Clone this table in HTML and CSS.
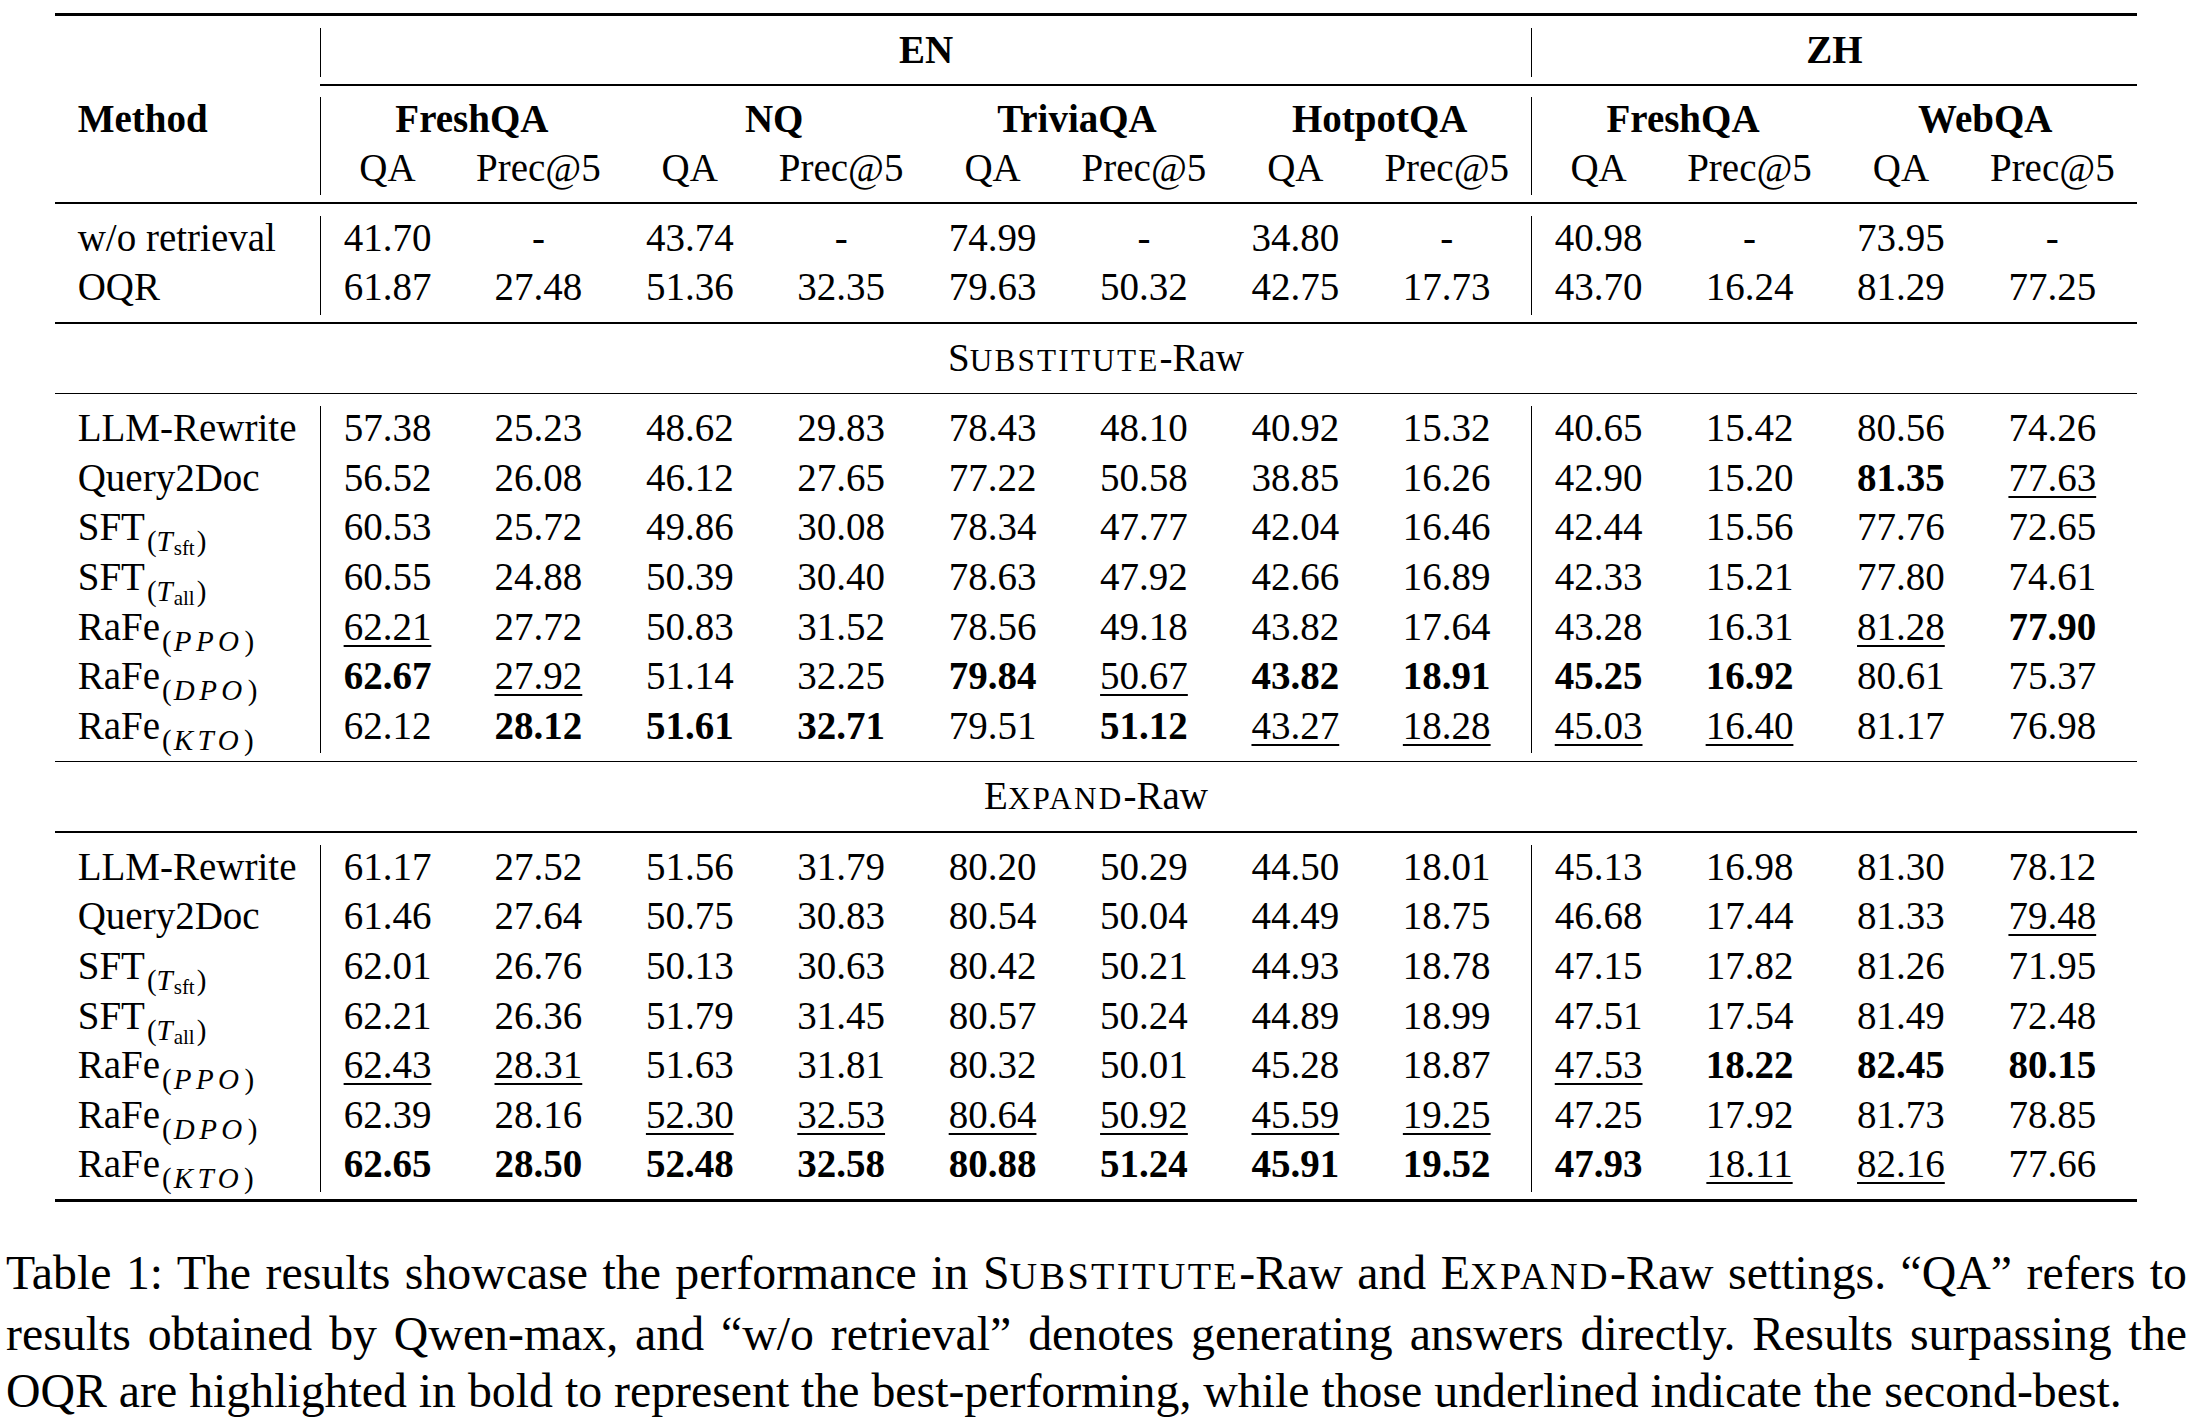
FILE: index.html
```html
<!DOCTYPE html>
<html lang="en">
<head>
<meta charset="utf-8">
<title>Table 1</title>
<link rel="stylesheet" href="styles.css">
</head>
<body>
<div class="page">
  <div class="table">
    <div class="rule thick top"></div>

    <div class="grid head1">
      <div class="cell"></div>
      <div class="grp vr en">EN</div>
      <div class="grp vr zh">ZH</div>
    </div>

    <div class="cmid"></div>

    <div class="grid head2">
      <div class="m b">Method</div>
      <div class="ds vr b">FreshQA</div>
      <div class="ds b">NQ</div>
      <div class="ds b">TriviaQA</div>
      <div class="ds b">HotpotQA</div>
      <div class="ds vr b">FreshQA</div>
      <div class="ds b">WebQA</div>

      <div class="m"></div>
      <div class="c vr">QA</div><div class="c">Prec@5</div>
      <div class="c">QA</div><div class="c">Prec@5</div>
      <div class="c">QA</div><div class="c">Prec@5</div>
      <div class="c">QA</div><div class="c">Prec@5</div>
      <div class="c vr">QA</div><div class="c">Prec@5</div>
      <div class="c">QA</div><div class="c">Prec@5</div>
    </div>

    <div class="rule mid"></div>

    <div class="grid body">
      <div class="m">w/o retrieval</div>
      <div class="c vr">41.70</div><div class="c">-</div><div class="c">43.74</div><div class="c">-</div><div class="c">74.99</div><div class="c">-</div><div class="c">34.80</div><div class="c">-</div><div class="c vr">40.98</div><div class="c">-</div><div class="c">73.95</div><div class="c">-</div>

      <div class="m">OQR</div>
      <div class="c vr">61.87</div><div class="c">27.48</div><div class="c">51.36</div><div class="c">32.35</div><div class="c">79.63</div><div class="c">50.32</div><div class="c">42.75</div><div class="c">17.73</div><div class="c vr">43.70</div><div class="c">16.24</div><div class="c">81.29</div><div class="c">77.25</div>
    </div>

    <div class="rule mid"></div>
    <div class="section">S<span class="sc">UBSTITUTE</span>-Raw</div>
    <div class="rule mid"></div>

    <div class="grid body">
      <div class="m">LLM-Rewrite</div>
      <div class="c vr">57.38</div><div class="c">25.23</div><div class="c">48.62</div><div class="c">29.83</div><div class="c">78.43</div><div class="c">48.10</div><div class="c">40.92</div><div class="c">15.32</div><div class="c vr">40.65</div><div class="c">15.42</div><div class="c">80.56</div><div class="c">74.26</div>

      <div class="m">Query2Doc</div>
      <div class="c vr">56.52</div><div class="c">26.08</div><div class="c">46.12</div><div class="c">27.65</div><div class="c">77.22</div><div class="c">50.58</div><div class="c">38.85</div><div class="c">16.26</div><div class="c vr">42.90</div><div class="c">15.20</div><div class="c"><b>81.35</b></div><div class="c"><u>77.63</u></div>

      <div class="m">SFT<span class="sub">(<i>T</i><span class="ss">sft</span>)</span></div>
      <div class="c vr">60.53</div><div class="c">25.72</div><div class="c">49.86</div><div class="c">30.08</div><div class="c">78.34</div><div class="c">47.77</div><div class="c">42.04</div><div class="c">16.46</div><div class="c vr">42.44</div><div class="c">15.56</div><div class="c">77.76</div><div class="c">72.65</div>

      <div class="m">SFT<span class="sub">(<i>T</i><span class="ss">all</span>)</span></div>
      <div class="c vr">60.55</div><div class="c">24.88</div><div class="c">50.39</div><div class="c">30.40</div><div class="c">78.63</div><div class="c">47.92</div><div class="c">42.66</div><div class="c">16.89</div><div class="c vr">42.33</div><div class="c">15.21</div><div class="c">77.80</div><div class="c">74.61</div>

      <div class="m">RaFe<span class="sub">(<i class="mi">PPO</i>)</span></div>
      <div class="c vr"><u>62.21</u></div><div class="c">27.72</div><div class="c">50.83</div><div class="c">31.52</div><div class="c">78.56</div><div class="c">49.18</div><div class="c">43.82</div><div class="c">17.64</div><div class="c vr">43.28</div><div class="c">16.31</div><div class="c"><u>81.28</u></div><div class="c"><b>77.90</b></div>

      <div class="m">RaFe<span class="sub">(<i class="mi">DPO</i>)</span></div>
      <div class="c vr"><b>62.67</b></div><div class="c"><u>27.92</u></div><div class="c">51.14</div><div class="c">32.25</div><div class="c"><b>79.84</b></div><div class="c"><u>50.67</u></div><div class="c"><b>43.82</b></div><div class="c"><b>18.91</b></div><div class="c vr"><b>45.25</b></div><div class="c"><b>16.92</b></div><div class="c">80.61</div><div class="c">75.37</div>

      <div class="m">RaFe<span class="sub">(<i class="mi">KTO</i>)</span></div>
      <div class="c vr">62.12</div><div class="c"><b>28.12</b></div><div class="c"><b>51.61</b></div><div class="c"><b>32.71</b></div><div class="c">79.51</div><div class="c"><b>51.12</b></div><div class="c"><u>43.27</u></div><div class="c"><u>18.28</u></div><div class="c vr"><u>45.03</u></div><div class="c"><u>16.40</u></div><div class="c">81.17</div><div class="c">76.98</div>
    </div>

    <div class="rule mid"></div>
    <div class="section">E<span class="sc">XPAND</span>-Raw</div>
    <div class="rule mid"></div>

    <div class="grid body">
      <div class="m">LLM-Rewrite</div>
      <div class="c vr">61.17</div><div class="c">27.52</div><div class="c">51.56</div><div class="c">31.79</div><div class="c">80.20</div><div class="c">50.29</div><div class="c">44.50</div><div class="c">18.01</div><div class="c vr">45.13</div><div class="c">16.98</div><div class="c">81.30</div><div class="c">78.12</div>

      <div class="m">Query2Doc</div>
      <div class="c vr">61.46</div><div class="c">27.64</div><div class="c">50.75</div><div class="c">30.83</div><div class="c">80.54</div><div class="c">50.04</div><div class="c">44.49</div><div class="c">18.75</div><div class="c vr">46.68</div><div class="c">17.44</div><div class="c">81.33</div><div class="c"><u>79.48</u></div>

      <div class="m">SFT<span class="sub">(<i>T</i><span class="ss">sft</span>)</span></div>
      <div class="c vr">62.01</div><div class="c">26.76</div><div class="c">50.13</div><div class="c">30.63</div><div class="c">80.42</div><div class="c">50.21</div><div class="c">44.93</div><div class="c">18.78</div><div class="c vr">47.15</div><div class="c">17.82</div><div class="c">81.26</div><div class="c">71.95</div>

      <div class="m">SFT<span class="sub">(<i>T</i><span class="ss">all</span>)</span></div>
      <div class="c vr">62.21</div><div class="c">26.36</div><div class="c">51.79</div><div class="c">31.45</div><div class="c">80.57</div><div class="c">50.24</div><div class="c">44.89</div><div class="c">18.99</div><div class="c vr">47.51</div><div class="c">17.54</div><div class="c">81.49</div><div class="c">72.48</div>

      <div class="m">RaFe<span class="sub">(<i class="mi">PPO</i>)</span></div>
      <div class="c vr"><u>62.43</u></div><div class="c"><u>28.31</u></div><div class="c">51.63</div><div class="c">31.81</div><div class="c">80.32</div><div class="c">50.01</div><div class="c">45.28</div><div class="c">18.87</div><div class="c vr"><u>47.53</u></div><div class="c"><b>18.22</b></div><div class="c"><b>82.45</b></div><div class="c"><b>80.15</b></div>

      <div class="m">RaFe<span class="sub">(<i class="mi">DPO</i>)</span></div>
      <div class="c vr">62.39</div><div class="c">28.16</div><div class="c"><u>52.30</u></div><div class="c"><u>32.53</u></div><div class="c"><u>80.64</u></div><div class="c"><u>50.92</u></div><div class="c"><u>45.59</u></div><div class="c"><u>19.25</u></div><div class="c vr">47.25</div><div class="c">17.92</div><div class="c">81.73</div><div class="c">78.85</div>

      <div class="m">RaFe<span class="sub">(<i class="mi">KTO</i>)</span></div>
      <div class="c vr"><b>62.65</b></div><div class="c"><b>28.50</b></div><div class="c"><b>52.48</b></div><div class="c"><b>32.58</b></div><div class="c"><b>80.88</b></div><div class="c"><b>51.24</b></div><div class="c"><b>45.91</b></div><div class="c"><b>19.52</b></div><div class="c vr"><b>47.93</b></div><div class="c"><u>18.11</u></div><div class="c"><u>82.16</u></div><div class="c">77.66</div>
    </div>

    <div class="rule thick bottom"></div>
  </div>

  <div class="caption">
    <div class="line just">Table 1: The results showcase the performance in S<span class="csc">UBSTITUTE</span>-Raw and E<span class="csc">XPAND</span>-Raw settings. “QA” refers to</div>
    <div class="line just">results obtained by Qwen-max, and “w/o retrieval” denotes generating answers directly. Results surpassing the</div>
    <div class="line">OQR are highlighted in bold to represent the best-performing, while those underlined indicate the second-best.</div>
  </div>
</div>
</body>
</html>
```

FILE: styles.css
```css
html, body {
  margin: 0;
  padding: 0;
  background: #ffffff;
}

body {
  font-family: "Liberation Serif", "Times New Roman", Times, serif;
  color: #000;
}

.page {
  padding-top: 13px;
}

.table {
  margin-left: 55px;
  width: 2082px;
  display: flex;
  flex-direction: column;
  font-size: 39px;
}

.rule {
  background: #000;
  width: 100%;
}

.rule.thick {
  height: 3px;
}

.rule.top {
  margin-bottom: 12px;
}

.rule.bottom {
  margin-top: 7px;
}

.rule.mid {
  height: 1.5px;
  margin-top: 7.5px;
  margin-bottom: 12px;
}

.cmid {
  height: 1.5px;
  background: #000;
  margin: 7px 0 11px 265px;
}

.grid {
  display: grid;
  grid-template-columns: 265px repeat(12, 151.4px);
  line-height: 44px;
}

.head1 {
  grid-template-rows: 49px;
}

.head2 {
  grid-auto-rows: 49px;
}

.body {
  grid-auto-rows: 49.6px;
}

.vr {
  border-left: 1px solid #000;
}

.grp {
  font-weight: bold;
  text-align: center;
}

.en {
  grid-column: 2 / 10;
}

.zh {
  grid-column: 10 / 14;
}

.ds {
  grid-column: span 2;
  text-align: center;
}

.b {
  font-weight: bold;
}

.m {
  padding-left: 22.7px;
  white-space: nowrap;
}

.c {
  padding-right: 17.4px;
  text-align: center;
  white-space: nowrap;
}

.c u {
  text-decoration: underline;
  text-decoration-thickness: 1.5px;
  text-underline-offset: 5px;
}

.sub {
  font-size: 29px;
  line-height: 0;
  vertical-align: -11px;
  padding-left: 2px;
}

.sub i {
  font-style: italic;
  padding-right: 1px;
}

.sub .mi {
  letter-spacing: 4.5px;
  padding-left: 2px;
}

.ss {
  font-size: 21px;
  vertical-align: -4px;
  padding-right: 2px;
}

.section {
  height: 49.5px;
  line-height: 44px;
  text-align: center;
}

.sc {
  font-size: 0.8em;
  letter-spacing: 2.2px;
}

.caption {
  margin-top: 42px;
  margin-left: 6px;
  width: 2181px;
  font-size: 47.8px;
  line-height: 57px;
}

.caption .line {
  white-space: nowrap;
}

.caption .line.just {
  white-space: normal;
  text-align: justify;
  text-align-last: justify;
}

.csc {
  font-size: 0.8em;
  letter-spacing: 2.4px;
}
```
